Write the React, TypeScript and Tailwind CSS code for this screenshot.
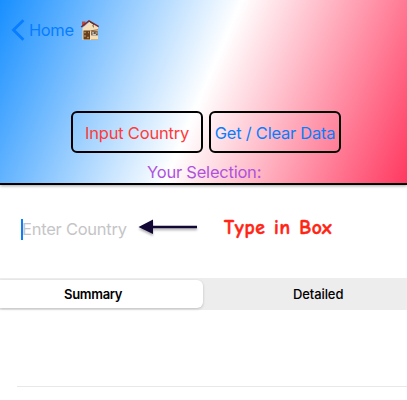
import React from "react";

function HouseIcon() {
  return (
    <svg className="ml-[6px] h-[22px] w-[20px] shrink-0" viewBox="0 0 20 22">
      <path d="M2.5 9 L10 2.5 L18 8 V21 H2.5 Z" fill="#f3dfb9" />
      <path d="M2 2.5 H5.5 V6 L2 8 Z" fill="#b94b45" />
      <path d="M1.2 8 L9 1.8 L18.7 7.6" fill="none" stroke="#7d292c" strokeWidth="1.5" />
      <path d="M10 3 L13.5 5.2 L12.8 7.2 L14 8.3" fill="none" stroke="#4b2b2a" strokeWidth="0.8" />
      <rect x="3.5" y="11.5" width="6.5" height="9" fill="#65411f" />
      <path d="M4 13.5 H6 M8 13.5 H9 M4 17 H6 M7 18.5 H9" stroke="#af8050" strokeWidth="1.3" />
      <rect x="11.2" y="12.2" width="6.6" height="4.2" fill="#68503d" />
      <path d="M12 13.8 H14 M15.5 14 H17.5 M12.5 15.6 H16" stroke="#c9cbc3" strokeWidth="1.2" />
      <path d="M10.5 11.8 L18 10.8" stroke="#93623b" strokeWidth="1" />
      <path d="M11 20.5 H18" stroke="#d7b27d" strokeWidth="1" />
    </svg>
  );
}

export default function App() {
  return (
    <div className="h-[400px] w-[407px] overflow-hidden bg-white font-['Inter',sans-serif] text-[17px] leading-[22px]">
      <header className="flex h-[185px] flex-col border-b-2 border-black bg-[linear-gradient(113deg,#188fff_0%,#ffffff_50%,#ff3960_100%)] shadow-[0_1px_3px_rgba(0,0,0,0.35)]">
        <div className="flex h-[61px] items-center pl-[11px] text-[#087dff]">
          <svg className="h-[22px] w-[15px]" viewBox="0 0 15 22" fill="none" stroke="currentColor" strokeWidth="2.8">
            <path d="M12.4 1.3 L2.5 11 L12.4 20.7" />
          </svg>
          <span className="ml-[3px] w-[45px] whitespace-nowrap text-[16.5px] tracking-[-0.4px]">Home</span>
          <HouseIcon />
        </div>
        <div className="mt-[51px] flex gap-[6px] pl-[71px]">
          <button className="h-[42px] w-[132px] whitespace-nowrap rounded-[6px] border-2 border-black pt-[1px] text-[16.5px] tracking-[-0.2px] text-[#ff3b38]">Input Country</button>
          <button className="h-[42px] w-[132px] whitespace-nowrap rounded-[6px] border-2 border-black pt-[1px] text-[16.5px] tracking-[-0.25px] text-[#087dff]">Get / Clear Data</button>
        </div>
        <div className="mt-[8px] pl-[147px] text-[16.5px] tracking-[-0.22px] text-[#af52de]">Your Selection:</div>
      </header>
      <div className="flex h-[93px] items-center pl-[21px]">
        <div className="mb-[4px] h-[21px] w-[2px] bg-[#0880ff]" />
        <span className="-ml-[1px] mb-[6px] w-[116px] whitespace-nowrap text-[16.5px] tracking-[-0.25px] text-[#c5c5c7]">Enter Country</span>
        <svg className="mb-[9px] h-[18px] w-[61px] drop-shadow-[0_2px_1px_rgba(0,0,0,0.3)]" viewBox="0 0 61 18">
          <path d="M0.5 9 L15 1.5 V16 Z" fill="#120735" />
          <path d="M14 9 H59" stroke="#120735" strokeWidth="2.6" />
        </svg>
        <span className="mb-[8px] ml-[25px] whitespace-nowrap font-['Comic_Neue','Lato',sans-serif] text-[19.5px] font-bold tracking-[0.65px] text-[#ff2414] [word-spacing:1px] [-webkit-text-stroke:0.5px_#ff2414]">Type in Box</span>
      </div>
      <div className="flex h-[32px] bg-[#ededee] py-[2px] text-[13px] leading-[28px] text-black">
        <div className="h-[28px] w-[203px] rounded-r-[6px] bg-white pl-[64px] font-semibold tracking-[-0.3px] shadow-[0_1px_3px_rgba(0,0,0,0.2)]">Summary</div>
        <div className="pl-[90px] font-medium tracking-[-0.1px]">Detailed</div>
      </div>
      <div className="ml-[17px] h-[77px] border-b border-[#e8e8e9]" />
    </div>
  );
}
